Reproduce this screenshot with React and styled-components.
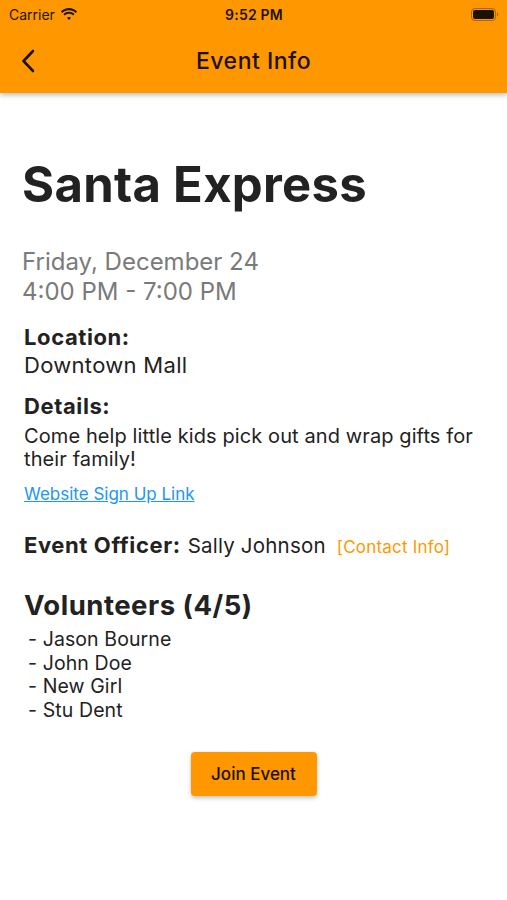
import styled, { createGlobalStyle } from "styled-components";

const GlobalStyle = createGlobalStyle`
  html, body {
    margin: 0;
    padding: 0;
    background: #ffffff;
  }
  body {
    font-family: Inter, "Noto Sans", sans-serif;
    color: #222222;
  }
`;

const Screen = styled.div`
  width: 507px;
  min-height: 900px;
  background: #ffffff;
  display: flex;
  flex-direction: column;
`;

// Верхняя панель
const TopBar = styled.header`
  background: #ff9800;
  box-shadow: 0 2px 5px rgba(0, 0, 0, 0.28);
  display: flex;
  flex-direction: column;
  position: relative;
  z-index: 1;
`;

const StatusBar = styled.div`
  height: 28px;
  display: flex;
  align-items: center;
  justify-content: space-between;
  padding: 0 8px 0 9px;
  font-size: 14px;
  color: #1c1200;
`;

const Carrier = styled.div`
  display: flex;
  align-items: center;
  gap: 5px;
  width: 120px;
`;

const Clock = styled.div`
  font-weight: 600;
  font-size: 14px;
  letter-spacing: 0.2px;
`;

const BatteryWrap = styled.div`
  width: 120px;
  display: flex;
  justify-content: flex-end;
`;

const NavBar = styled.div`
  height: 65px;
  display: flex;
  align-items: center;
  justify-content: center;
  position: relative;
`;

const BackButton = styled.button`
  position: absolute;
  left: 17px;
  top: 50%;
  transform: translateY(-50%);
  background: none;
  border: none;
  padding: 4px;
  display: flex;
  cursor: pointer;
`;

const NavTitle = styled.h1`
  margin: 0;
  font-size: 23px;
  font-weight: 500;
  letter-spacing: 0.5px;
  color: #1a1100;
`;

// Контент
const Content = styled.main`
  padding: 64px 22px 40px 22px;
  display: flex;
  flex-direction: column;
`;

const EventTitle = styled.h2`
  margin: 0;
  font-size: 49px;
  font-weight: 700;
  line-height: 56px;
  color: #222222;
  letter-spacing: 0.3px;
`;

const DateBlock = styled.div`
  margin-top: 34px;
  font-size: 24px;
  line-height: 30px;
  color: #7a7a7a;
`;

const Section = styled.section`
  margin-top: ${(p) => p.$gap || 12}px;
  padding-left: 2px;
`;

const Label = styled.div`
  font-size: 22px;
  font-weight: 700;
  line-height: 28px;
  letter-spacing: 0.6px;
  color: #222222;
`;

const Value = styled.div`
  font-size: 22px;
  line-height: 28px;
  letter-spacing: 0.3px;
  color: #222222;
`;

const Paragraph = styled.p`
  margin: 5px 0 0 0;
  font-size: 20px;
  line-height: 23px;
  letter-spacing: 0.1px;
  color: #222222;
`;

const SignUpLink = styled.a`
  display: inline-block;
  margin-top: 13px;
  margin-left: 2px;
  font-size: 17px;
  line-height: 20px;
  color: #2196f3;
  text-decoration: underline;
`;

const OfficerRow = styled.div`
  margin-top: 27px;
  padding-left: 2px;
  display: flex;
  align-items: baseline;
  line-height: 28px;
`;

const OfficerLabel = styled.span`
  font-size: 22px;
  font-weight: 700;
  letter-spacing: 0.6px;
  margin-right: 7px;
`;

const OfficerName = styled.span`
  font-size: 20.5px;
  letter-spacing: 0.2px;
  color: #222222;
`;

const ContactLink = styled.span`
  margin-left: 11px;
  font-size: 17px;
  letter-spacing: 0.2px;
  color: #ff9800;
`;

const VolunteersTitle = styled.h3`
  margin: 27px 0 0 2px;
  font-size: 27.5px;
  font-weight: 700;
  line-height: 34px;
  letter-spacing: 0.5px;
  color: #222222;
`;

const VolunteerList = styled.ul`
  list-style: none;
  margin: 6px 0 0 0;
  padding: 0 0 0 6px;
`;

const VolunteerItem = styled.li`
  font-size: 19.5px;
  line-height: 23.5px;
  letter-spacing: 0.1px;
  color: #222222;
`;

const ButtonRow = styled.div`
  margin-top: 30px;
  display: flex;
  justify-content: center;
`;

const JoinButton = styled.button`
  background: #ff9800;
  color: #1a1100;
  border: none;
  border-radius: 4px;
  height: 44px;
  width: 126px;
  font-family: inherit;
  font-size: 17px;
  font-weight: 500;
  box-shadow: 0 2px 4px rgba(0, 0, 0, 0.25);
  cursor: pointer;
`;

const WifiIcon = () => (
  <svg width="18" height="13" viewBox="0 0 18 13">
    <path d="M9 2.2c2.6 0 5 1 6.8 2.7l1.3-1.4C14.9 1.3 12 0 9 0S3.1 1.3.9 3.5l1.3 1.4C4 3.2 6.4 2.2 9 2.2z" fill="#1c1200" />
    <path d="M9 5.8c1.6 0 3.1.6 4.2 1.6l1.3-1.4C13 4.6 11.1 3.8 9 3.8S5 4.6 3.5 6l1.3 1.4c1.1-1 2.6-1.6 4.2-1.6z" fill="#1c1200" />
    <path d="M9 9c.8 0 1.5.3 2 .8L9 12 7 9.8c.5-.5 1.2-.8 2-.8z" fill="#1c1200" />
  </svg>
);

const BatteryIcon = () => (
  <svg width="28" height="13" viewBox="0 0 28 13">
    <rect x="0.5" y="0.5" width="24" height="12" rx="3.5" fill="none" stroke="#6b4500" strokeOpacity="0.6" />
    <rect x="2" y="2" width="21" height="9" rx="2" fill="#1c1200" />
    <path d="M26 4.5v4c.8-.3 1.3-1.1 1.3-2s-.5-1.7-1.3-2z" fill="#6b4500" fillOpacity="0.6" />
  </svg>
);

const BackIcon = () => (
  <svg width="14" height="24" viewBox="0 0 14 24">
    <path d="M12 2 L2.5 12 L12 22" fill="none" stroke="#1a1100" strokeWidth="2.6" strokeLinecap="round" strokeLinejoin="round" />
  </svg>
);

const volunteers = ["Jason Bourne", "John Doe", "New Girl", "Stu Dent"];

export default function App() {
  return (
    <>
      <GlobalStyle />
      <Screen>
        <TopBar>
          <StatusBar>
            <Carrier>
              Carrier <WifiIcon />
            </Carrier>
            <Clock>9:52 PM</Clock>
            <BatteryWrap>
              <BatteryIcon />
            </BatteryWrap>
          </StatusBar>
          <NavBar>
            <BackButton aria-label="Back">
              <BackIcon />
            </BackButton>
            <NavTitle>Event Info</NavTitle>
          </NavBar>
        </TopBar>

        <Content>
          <EventTitle>Santa Express</EventTitle>
          <DateBlock>
            Friday, December 24
            <br />
            4:00 PM - 7:00 PM
          </DateBlock>

          <Section $gap={16}>
            <Label>Location:</Label>
            <Value>Downtown Mall</Value>
          </Section>

          <Section $gap={13}>
            <Label>Details:</Label>
            <Paragraph>
              Come help little kids pick out and wrap gifts for their family!
            </Paragraph>
          </Section>
          <div>
            <SignUpLink href="#">Website Sign Up Link</SignUpLink>
          </div>

          <OfficerRow>
            <OfficerLabel>Event Officer:</OfficerLabel>
            <OfficerName>Sally Johnson</OfficerName>
            <ContactLink>[Contact Info]</ContactLink>
          </OfficerRow>

          <VolunteersTitle>Volunteers (4/5)</VolunteersTitle>
          <VolunteerList>
            {volunteers.map((name) => (
              <VolunteerItem key={name}>- {name}</VolunteerItem>
            ))}
          </VolunteerList>

          <ButtonRow>
            <JoinButton>Join Event</JoinButton>
          </ButtonRow>
        </Content>
      </Screen>
    </>
  );
}
